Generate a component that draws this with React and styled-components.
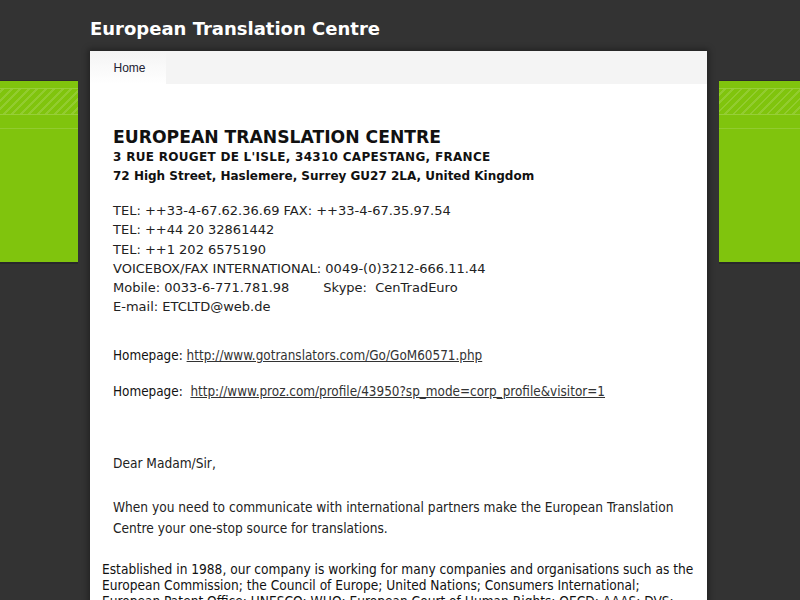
import React from 'react'
import styled, { createGlobalStyle } from 'styled-components';

const GlobalStyle = createGlobalStyle`
  html, body {
    margin: 0;
    padding: 0;
    background: #333333;
  }
  body {
    font-family: "DejaVu Sans", Verdana, sans-serif;
    overflow: hidden;
  }
`

const contacts = [
  'TEL: ++33-4-67.62.36.69 FAX: ++33-4-67.35.97.54',
  'TEL: ++44 20 32861442',
  'TEL: ++1 202 6575190',
  'VOICEBOX/FAX INTERNATIONAL: 0049-(0)3212-666.11.44',
];

function App() {
  return (
    <>
      <GlobalStyle />
      <Page>
        <Header>
          <SiteTitle>European Translation Centre</SiteTitle>
        </Header>
        <Panel>
          <Nav>
            <Tab>Home</Tab>
          </Nav>
          <Content>
            <Address>
              <h1>EUROPEAN TRANSLATION CENTRE</h1>
              <AddressLine spacing={0.3}>3 RUE ROUGET DE L'ISLE, 34310 CAPESTANG, FRANCE</AddressLine>
              <AddressLine>72 High Street, Haslemere, Surrey GU27 2LA, United Kingdom</AddressLine>
            </Address>
            <Contact>
              {contacts.map(line => <p key={line}>{line}</p>)}
              <p>Mobile: 0033-6-771.781.98<Gap />Skype:&nbsp; CenTradEuro</p>
              <p>E-mail: ETCLTD@web.de</p>
            </Contact>
            <Links>
              <LinkLine>Homepage: <a href="#">http://www.gotranslators.com/Go/GoM60571.php</a></LinkLine>
              <LinkLine>Homepage:&nbsp; <a href="#">http://www.proz.com/profile/43950?sp_mode=corp_profile&amp;visitor=1</a></LinkLine>
            </Links>
            <Letter>
              <p>Dear Madam/Sir,</p>
              <p>When you need to communicate with international partners make the European Translation Centre your one-stop source for translations.</p>
            </Letter>
            <Intro>
              Established in 1988, our company is working for many companies and organisations such as the European Commission; the Council of Europe; United Nations; Consumers International; European Patent Office; UNESCO; WHO; European Court of Human Rights; OECD; AAAS; DVS;
            </Intro>
          </Content>
        </Panel>
      </Page>
    </>
  )
}

const Page = styled.div`
  min-height: 600px;
  background:
    linear-gradient(#2b2b2b, #2b2b2b) 0 80px / 100% 1px no-repeat,
    linear-gradient(rgba(255,255,255,0.18), rgba(255,255,255,0.18)) 0 88px / 100% 1px no-repeat,
    linear-gradient(rgba(255,255,255,0.18), rgba(255,255,255,0.18)) 0 114px / 100% 1px no-repeat,
    linear-gradient(rgba(255,255,255,0.14), rgba(255,255,255,0.14)) 0 128px / 100% 1px no-repeat,
    repeating-linear-gradient(-45deg, transparent 0 4px, rgba(255,255,255,0.14) 4px 6px) 0 89px / 100% 25px no-repeat,
    linear-gradient(#80c40d, #80c40d) 0 81px / 100% 181px no-repeat,
    linear-gradient(#28282a, #28282a) 0 262px / 100% 2px no-repeat,
    #333333;
  overflow: hidden;
`

const Header = styled.div`
  width: 617px;
  margin-left: 90px;
  height: 51px;
  display: flex;
  align-items: center;
`

const SiteTitle = styled.div`
  color: #ffffff;
  font-family: "DejaVu Sans", Verdana, sans-serif;
  font-size: 18px;
  font-weight: bold;
  margin-top: 6px;
`

const Panel = styled.div`
  width: 617px;
  margin-left: 90px;
  min-height: 560px;
  background: #ffffff;
  box-shadow: 0 0 6px 2px rgba(0,0,0,0.35), 0 0 0 12px #333333;
`

const Nav = styled.div`
  height: 33px;
  background: #f4f4f4;
  display: flex;
`

const Tab = styled.div`
  width: 76px;
  display: flex;
  align-items: center;
  justify-content: center;
  background: linear-gradient(#f4f4f4, #ffffff);
  font-family: "Liberation Sans", Arial, sans-serif;
  font-size: 12px;
  color: #222233;
  padding: 0 0 0 3px;
  box-sizing: border-box;
`

const Content = styled.div`
  padding: 42px 12px 0 23px;
  color: #111111;
  p { margin: 0; }
`

const Address = styled.div`
  h1 {
    margin: 0;
    font-family: "DejaVu Sans", Verdana, sans-serif;
    font-size: 17.2px;
    font-weight: bold;
    line-height: 22px;
  }
`

const AddressLine = styled.p`
  font-family: "DejaVu Sans", Verdana, sans-serif;
  font-size: 12px;
  font-weight: bold;
  line-height: 19px;
  letter-spacing: ${p => p.spacing || 0}px;
  &:first-of-type { margin-top: 0; }
`

const Contact = styled.div`
  margin-top: 15px;
  font-family: "DejaVu Sans", Verdana, sans-serif;
  font-size: 13px;
  line-height: 19.3px;
  color: #222222;
`

const Gap = styled.span`
  display: inline-block;
  width: 34px;
`

const Links = styled.div`
  margin-top: 31px;
  display: flex;
  flex-direction: column;
  gap: 20px;
`

const LinkLine = styled.p`
  font-family: "DejaVu Sans Condensed", Tahoma, sans-serif;
  font-size: 13.4px;
  line-height: 16px;
  color: #111111;
  a {
    color: #333333;
    text-decoration: underline;
  }
`

const Letter = styled.div`
  margin-top: 53px;
  font-family: "DejaVu Sans Condensed", Tahoma, sans-serif;
  font-size: 13.6px;
  line-height: 21px;
  color: #222222;
  p + p { margin-top: 23px; }
`

const Intro = styled.p`
  margin: 22px -4px 0 -11px !important;
  font-family: "DejaVu Sans Condensed", Tahoma, sans-serif;
  font-size: 13.6px;
  line-height: 16px;
  color: #111111;
`

export default App
